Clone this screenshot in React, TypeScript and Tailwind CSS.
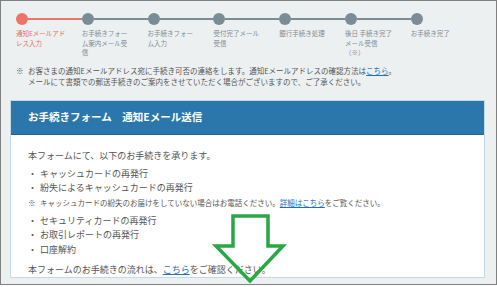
import React from "react";

const steps = [
  ["通知Eメールアド", "レス入力"],
  ["お手続きフォー", "ム案内メール受", "信"],
  ["お手続きフォー", "ム入力"],
  ["受付完了メール", "受信"],
  ["銀行手続き処理"],
  ["後日 手続き完了", "メール受信", "（※）"],
  ["お手続き完了"],
];

function Stepper() {
  return (
    <div className="flex pl-[15px] pt-[12px]">
      {steps.map((lines, i) => {
        const active = i === 0;
        const last = i === steps.length - 1;
        return (
          <div key={lines.join("")} className="w-[65.8px] shrink-0">
            <div className="flex h-[12px] items-center">
              <span
                className={`h-[12px] w-[12px] shrink-0 rounded-full ${
                  active ? "bg-[#ec7468]" : "bg-[#7a8c96]"
                }`}
              />
              {!last && (
                <span
                  className={`h-[2px] flex-1 ${
                    active ? "bg-[#ec7468]" : "bg-[#7a8c96]"
                  }`}
                />
              )}
            </div>
            <p
              className={`mt-[4px] whitespace-nowrap text-[6.5px] leading-[9.5px] ${
                active ? "text-[#e46f64]" : "text-[#7f8c93]"
              }`}
            >
              {lines.map((l) => (
                <span key={l} className="block">
                  {l}
                </span>
              ))}
            </p>
          </div>
        );
      })}
    </div>
  );
}

function Bullet({ children }: { children: React.ReactNode }) {
  return (
    <li className="flex h-[14.5px] items-center">
      <span className="w-[12px] shrink-0">・</span>
      <span>{children}</span>
    </li>
  );
}

export default function App() {
  return (
    <div
      className="h-[287px] w-[497px] overflow-hidden bg-white"
      style={{ fontFamily: '"Noto Sans CJK JP", "Noto Sans", sans-serif' }}
    >
      <div className="relative h-[285px] overflow-hidden border border-[#808080] bg-[#edf0f1]">
        <Stepper />

        <div className="mt-[7px] flex pl-[15px] text-[7.5px] leading-[11px] text-[#555]">
          <span className="w-[12px] shrink-0">※</span>
          <p>
            お客さまの通知Eメールアドレス宛に手続き可否の連絡をします。通知Eメールアドレスの確認方法は
            <a className="text-[#1d6fb8] underline">こちら</a>。
            <br />
            メールにて書類での郵送手続きのご案内をさせていただく場合がございますので、ご了承ください。
          </p>
        </div>

        <section className="ml-[9px] mr-[11px] mt-[13px] border border-[#c3d9e8] bg-white">
          <h2 className="flex h-[34px] items-center border-b border-[#22679a] bg-[#2b77ac] pl-[17px] text-[10.5px] font-bold text-white">
            お手続きフォーム　通知Eメール送信
          </h2>
          <div className="pl-[17px] pt-[14px] text-[9px] leading-[14px] text-[#555]">
            <p>本フォームにて、以下のお手続きを承ります。</p>
            <ul className="mt-[4px]">
              <Bullet>キャッシュカードの再発行</Bullet>
              <Bullet>紛失によるキャッシュカードの再発行</Bullet>
            </ul>
            <p className="mb-[3px] flex h-[15px] items-center text-[7.5px]">
              <span className="w-[12px] shrink-0">※</span>
              <span>
                キャッシュカードの紛失のお届けをしていない場合はお電話ください。
                <a className="text-[#1d6fb8] underline">詳細はこちら</a>
                をご覧ください。
              </span>
            </p>
            <ul>
              <Bullet>セキュリティカードの再発行</Bullet>
              <Bullet>お取引レポートの再発行</Bullet>
              <Bullet>口座解約</Bullet>
            </ul>
            <p className="mt-[6px]">
              本フォームのお手続きの流れは、
              <a className="text-[#1d6fb8] underline">こちら</a>
              をご確認ください。
            </p>
          </div>
        </section>

        <svg
          className="absolute left-[210px] top-[210px]"
          width="78"
          height="76"
          viewBox="0 0 78 76"
          fill="none"
        >
          <polygon
            points="22,5 57,5 57,35 72,35 39,70 5,35 22,35"
            stroke="#27a844"
            strokeWidth="3.5"
            strokeLinejoin="miter"
          />
        </svg>
      </div>
    </div>
  );
}
